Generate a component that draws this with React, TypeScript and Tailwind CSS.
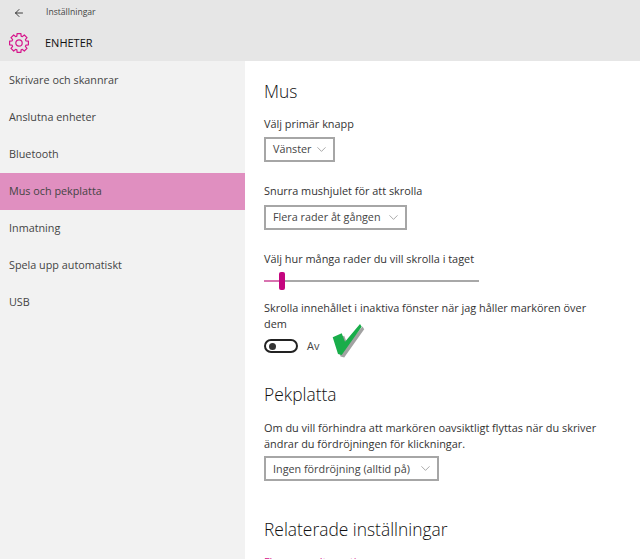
import { ArrowLeft, ChevronDown } from "lucide-react";

const menu = ["Skrivare och skannrar", "Anslutna enheter", "Bluetooth", "Mus och pekplatta", "Inmatning", "Spela upp automatiskt", "USB"];

// 8 tooth outline for the settings gear
const gearPoints = Array.from({ length: 8 }).flatMap((_, i) => {
  const a = (i * Math.PI) / 4;
  return [[-0.3, 7.2], [-0.2, 9.6], [0.2, 9.6], [0.3, 7.2]].map(([d, r]) => {
    const x = 10 + r * Math.sin(a + d);
    const y = 10 - r * Math.cos(a + d);
    return `${x.toFixed(2)},${y.toFixed(2)}`;
  });
}).join(" ");

function Gear() {
  return (
    <svg width="20" height="20" viewBox="0 0 20 20" fill="none" stroke="#d6168c" strokeWidth="1.2" strokeLinejoin="round">
      <polygon points={gearPoints} />
      <circle cx="10" cy="10" r="3.2" />
    </svg>
  );
}

function Select({ label, width }: { label: string; width: string }) {
  return (
    <div className={`flex h-[25px] items-center justify-between whitespace-nowrap border-2 border-[#a6a6a6] pl-[7px] pr-[4px] text-[10.8px] text-[#444] ${width}`}>
      <span>{label}</span>
      <ChevronDown size={15} strokeWidth={1} className="text-[#777]" />
    </div>
  );
}

export default function App() {
  return (
    <div className="flex h-[559px] w-[640px] flex-col overflow-hidden bg-white font-['Open_Sans',sans-serif] text-[#333]">
      <header className="h-[61px] shrink-0 bg-[#e6e6e6]">
        <div className="flex h-[25px] items-center pl-[13px]">
          <ArrowLeft size={12} strokeWidth={1.6} className="text-[#111]" />
          <span className="ml-[21px] text-[8.6px] text-[#444]">Inställningar</span>
        </div>
        <div className="flex h-[36px] items-center pl-[9px]">
          <Gear />
          <span className="ml-[16px] text-[11px] text-[#111]">ENHETER</span>
        </div>
      </header>
      <div className="flex min-h-0 flex-1">
        <nav className="w-[245px] shrink-0 bg-[#f2f2f2] pt-[1px]">
          {menu.map((item) => (
            <div key={item} className={`flex h-[37px] items-center pl-[9px] text-[10.8px] text-[#444] ${item === "Mus och pekplatta" ? "bg-[#e08fc0]" : ""}`}>
              {item}
            </div>
          ))}
        </nav>
        <main className="relative flex-1 pl-[19px] pr-[40px] pt-[16px]">
          <h2 className="text-[17.4px] font-light leading-[28px] text-[#111]">Mus</h2>
          <p className="mt-[11px] text-[10.9px] leading-[16px]">Välj primär knapp</p>
          <div className="mt-[5px]"><Select label="Vänster" width="w-[71px]" /></div>
          <p className="mt-[21px] text-[10.9px] leading-[16px]">Snurra mushjulet för att skrolla</p>
          <div className="mt-[6px]"><Select label="Flera rader åt gången" width="w-[143px]" /></div>
          <p className="mt-[21px] text-[10.9px] leading-[16px]">Välj hur många rader du vill skrolla i taget</p>
          <div className="relative mt-[5px] flex h-[18px] w-[215px] items-center">
            <div className="h-[2px] w-[15px] bg-[#d873b0]" />
            <div className="h-[2px] flex-1 bg-[#a8a8a8]" />
            <div className="absolute left-[15px] top-0 h-[18px] w-[6px] rounded-[2px] bg-[#c4067f]" />
          </div>
          <p className="mt-[10px] text-[10.9px] leading-[16px]">Skrolla innehållet i inaktiva fönster när jag håller markören över dem</p>
          <div className="mt-[6px] flex items-center">
            <div className="flex h-[14px] w-[34px] items-center rounded-full border-2 border-[#222] pl-[3px]">
              <div className="h-[7px] w-[7px] rounded-full bg-[#333]" />
            </div>
            <span className="ml-[9px] text-[10.9px] text-[#444]">Av</span>
          </div>
          <svg className="absolute left-[85px] top-[260px]" width="36" height="40" viewBox="0 0 36 40">
            <path d="M2.7 16.3 L11.7 12.3 L15 20.7 L30 3 L31.7 5.7 L11.7 34 L8 33 Z" fill="#555" opacity=".55" transform="translate(2.5 2.5)" />
            <path d="M2.7 16.3 L11.7 12.3 L15 20.7 L30 3 L31.7 5.7 L11.7 34 L8 33 Z" fill="#19ad4a" />
          </svg>
          <h2 className="mt-[26px] text-[17.4px] font-light leading-[28px] text-[#111]">Pekplatta</h2>
          <p className="mt-[12px] text-[10.9px] leading-[16px]">Om du vill förhindra att markören oavsiktligt flyttas när du skriver ändrar du fördröjningen för klickningar.</p>
          <div className="mt-[4px]"><Select label="Ingen fördröjning (alltid på)" width="w-[175px]" /></div>
          <h2 className="mt-[34px] text-[17.4px] font-light leading-[28px] text-[#111]">Relaterade inställningar</h2>
          <p className="mt-[11px] text-[10.9px] leading-[16px] text-[#d6168c]">Flera musalternativ</p>
        </main>
      </div>
    </div>
  );
}
